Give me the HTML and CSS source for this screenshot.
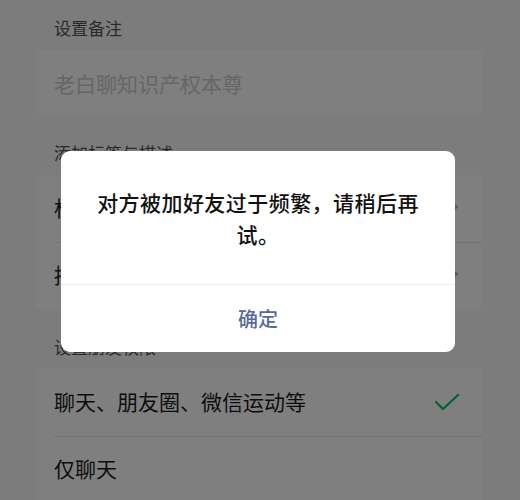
FILE: index.html
```html
<!DOCTYPE html>
<html lang="zh-CN">
<head>
<meta charset="utf-8">
<link rel="stylesheet" href="styles.css">
</head>
<body>
<div class="page">
  <div class="section first">
    <div class="label">设置备注</div>
    <div class="card">
      <div class="row input"><span class="placeholder">老白聊知识产权本尊</span></div>
    </div>
  </div>
  <div class="section">
    <div class="label">添加标签与描述</div>
    <div class="card">
      <div class="row"><span class="text">标签</span><span class="chev"></span></div>
      <div class="row"><span class="text">描述</span><span class="chev"></span></div>
    </div>
  </div>
  <div class="section">
    <div class="label">设置朋友权限</div>
    <div class="card">
      <div class="row"><span class="text">聊天、朋友圈、微信运动等</span>
        <svg class="check" width="26" height="20" viewBox="0 0 26 20"><path d="M2 10 L9 17 L24 3" fill="none" stroke="#07c160" stroke-width="2.2" stroke-linecap="round" stroke-linejoin="round"/></svg>
      </div>
      <div class="row"><span class="text">仅聊天</span></div>
    </div>
  </div>
</div>
<div class="mask"></div>
<div class="dialog-wrap">
  <div class="dialog">
    <div class="dialog-body">对方被加好友过于频繁，请稍后再试。</div>
    <div class="dialog-btn">确定</div>
  </div>
</div>
</body>
</html>
```

FILE: styles.css
```css
html, body {
  margin: 0;
  padding: 0;
  width: 520px;
  height: 500px;
  overflow: hidden;
  background: #f8f8f8;
  font-family: "Noto Sans CJK SC", "Noto Sans", sans-serif;
}
.page {
  padding: 18px 38px 0 36px;
}
.section {
  margin-top: 28px;
}
.section.first {
  margin-top: 0;
}
.label {
  font-size: 17px;
  line-height: 20px;
  height: 20px;
  color: #555555;
  padding-left: 18px;
  margin-bottom: 12px;
}
.card {
  background: #ffffff;
  border-radius: 4px;
}
.row {
  height: 67px;
  margin-left: 18px;
  padding-right: 22px;
  padding-bottom: 4px;
  display: flex;
  align-items: center;
  justify-content: space-between;
  border-top: 1px solid #e6e6e6;
  box-sizing: border-box;
}
.row:first-child {
  border-top: none;
}
.row.input {
  height: 65px;
  padding-bottom: 0;
}
.placeholder {
  font-size: 21px;
  color: #cccccc;
}
.text {
  font-size: 21px;
  color: #1a1a1a;
}
.chev {
  width: 8px;
  height: 8px;
  border-top: 2px solid #b2b2b2;
  border-right: 2px solid #b2b2b2;
  transform: rotate(45deg);
  margin-right: 4px;
}
.check {
  margin-top: 2px;
}
.mask {
  position: absolute;
  left: 0;
  top: 0;
  width: 520px;
  height: 500px;
  background: rgba(0, 0, 0, 0.5);
}
.dialog-wrap {
  position: absolute;
  left: 61px;
  top: 151px;
}
.dialog {
  width: 394px;
  background: #ffffff;
  border-radius: 9px;
  overflow: hidden;
}
.dialog-body {
  padding: 35px 34px 34px;
  font-size: 21px;
  letter-spacing: 0.45px;
  line-height: 32px;
  color: #111111;
  font-weight: 500;
  text-align: center;
  border-bottom: 1px solid #ededed;
}
.dialog-btn {
  height: 67px;
  line-height: 67px;
  text-align: center;
  font-size: 20px;
  font-weight: 500;
  color: #576b95;
}
```
